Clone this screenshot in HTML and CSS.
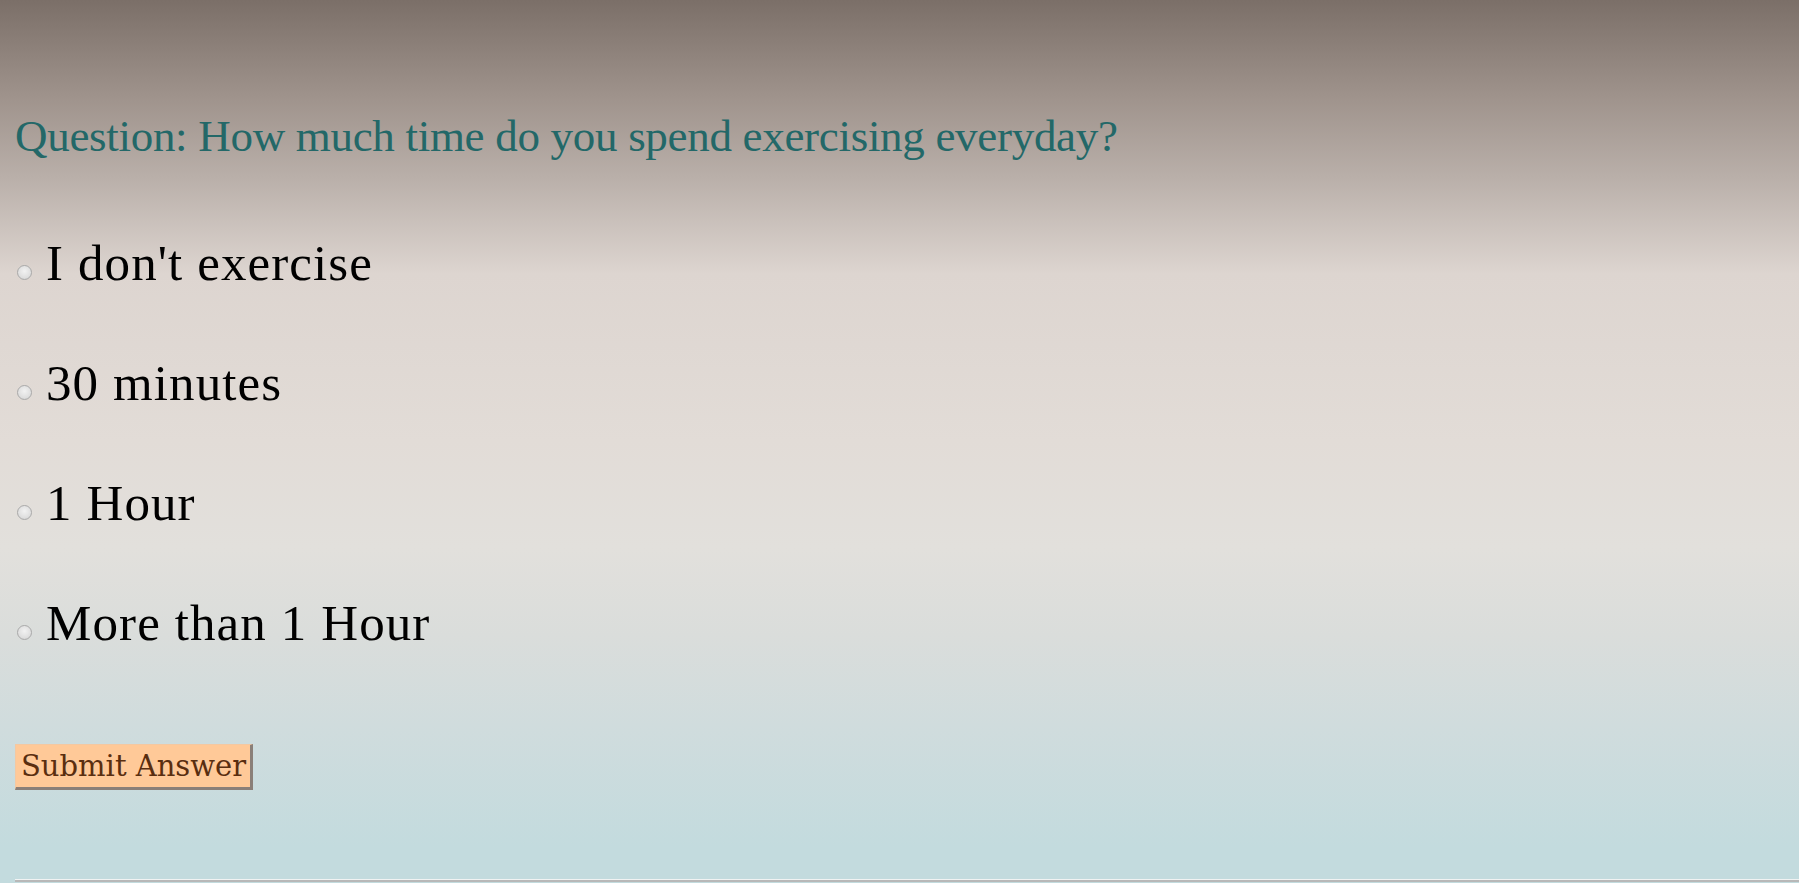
FILE: index.html
```html
<!DOCTYPE html>
<html lang="en">
<head>
<meta charset="utf-8">
<title>Exercise Poll</title>
<link rel="stylesheet" href="styles.css">
</head>
<body>
<main class="page">
  <h1 class="question">Question: How much time do you spend exercising everyday?</h1>
  <form class="poll">
    <label class="option"><input type="radio" name="ex" class="radio"><span>I don't exercise</span></label>
    <label class="option"><input type="radio" name="ex" class="radio"><span>30 minutes</span></label>
    <label class="option"><input type="radio" name="ex" class="radio"><span>1 Hour</span></label>
    <label class="option"><input type="radio" name="ex" class="radio"><span>More than 1 Hour</span></label>
    <button type="button" class="submit">Submit Answer</button>
  </form>
  <div class="divider"></div>
</main>
</body>
</html>
```

FILE: styles.css
```css
html {
  min-height: 100%;
  background: linear-gradient(to bottom,
    #7b6f68 0%,
    #9f938c 11%,
    #b9afa9 20%,
    #ddd5d0 31%,
    #e2dcd7 50%,
    #e2e0dc 62%,
    #dadddb 72%,
    #d0dcdd 82%,
    #c3dbde 96%,
    #c3dbde 100%) fixed;
}

body {
  margin: 0;
  font-family: "Liberation Serif", "DejaVu Serif", serif;
}

.page {
  padding: 114px 0 0 15px;
}

.question {
  margin: 0;
  font-size: 45px;
  line-height: 45px;
  letter-spacing: -0.3px;
  font-weight: normal;
  color: #236868;
}

.poll {
  display: flex;
  flex-direction: column;
  align-items: flex-start;
  margin-top: 44px;
}

.option {
  display: flex;
  align-items: baseline;
  font-size: 51px;
  line-height: 120px;
  letter-spacing: 1.1px;
  color: #000;
}

.radio {
  appearance: none;
  -webkit-appearance: none;
  width: 15px;
  height: 15px;
  margin: 0 14px 1px 2px;
  border: 1px solid #a9a9a9;
  border-radius: 50%;
  background: radial-gradient(circle at 50% 40%, #f2f2f2 0%, #dedede 65%, #c9c9c9 100%);
  box-sizing: border-box;
  flex: none;
}

.submit {
  margin-top: 61px;
  height: 46px;
  padding: 0 4px 0 5px;
  font-family: "DejaVu Serif", "Liberation Serif", serif;
  font-size: 29px;
  color: #5a2e10;
  background: #ffc998;
  border-style: solid;
  border-width: 1px 3px 3px 1px;
  border-color: #f3c8a2 #8a7f78 #8a7f78 #f3c8a2;
  cursor: pointer;
}

.divider {
  margin-top: 89px;
  height: 0;
  border-top: 1px solid #f1f3f3;
  border-bottom: 2px solid #b8b8b8;
}
```
